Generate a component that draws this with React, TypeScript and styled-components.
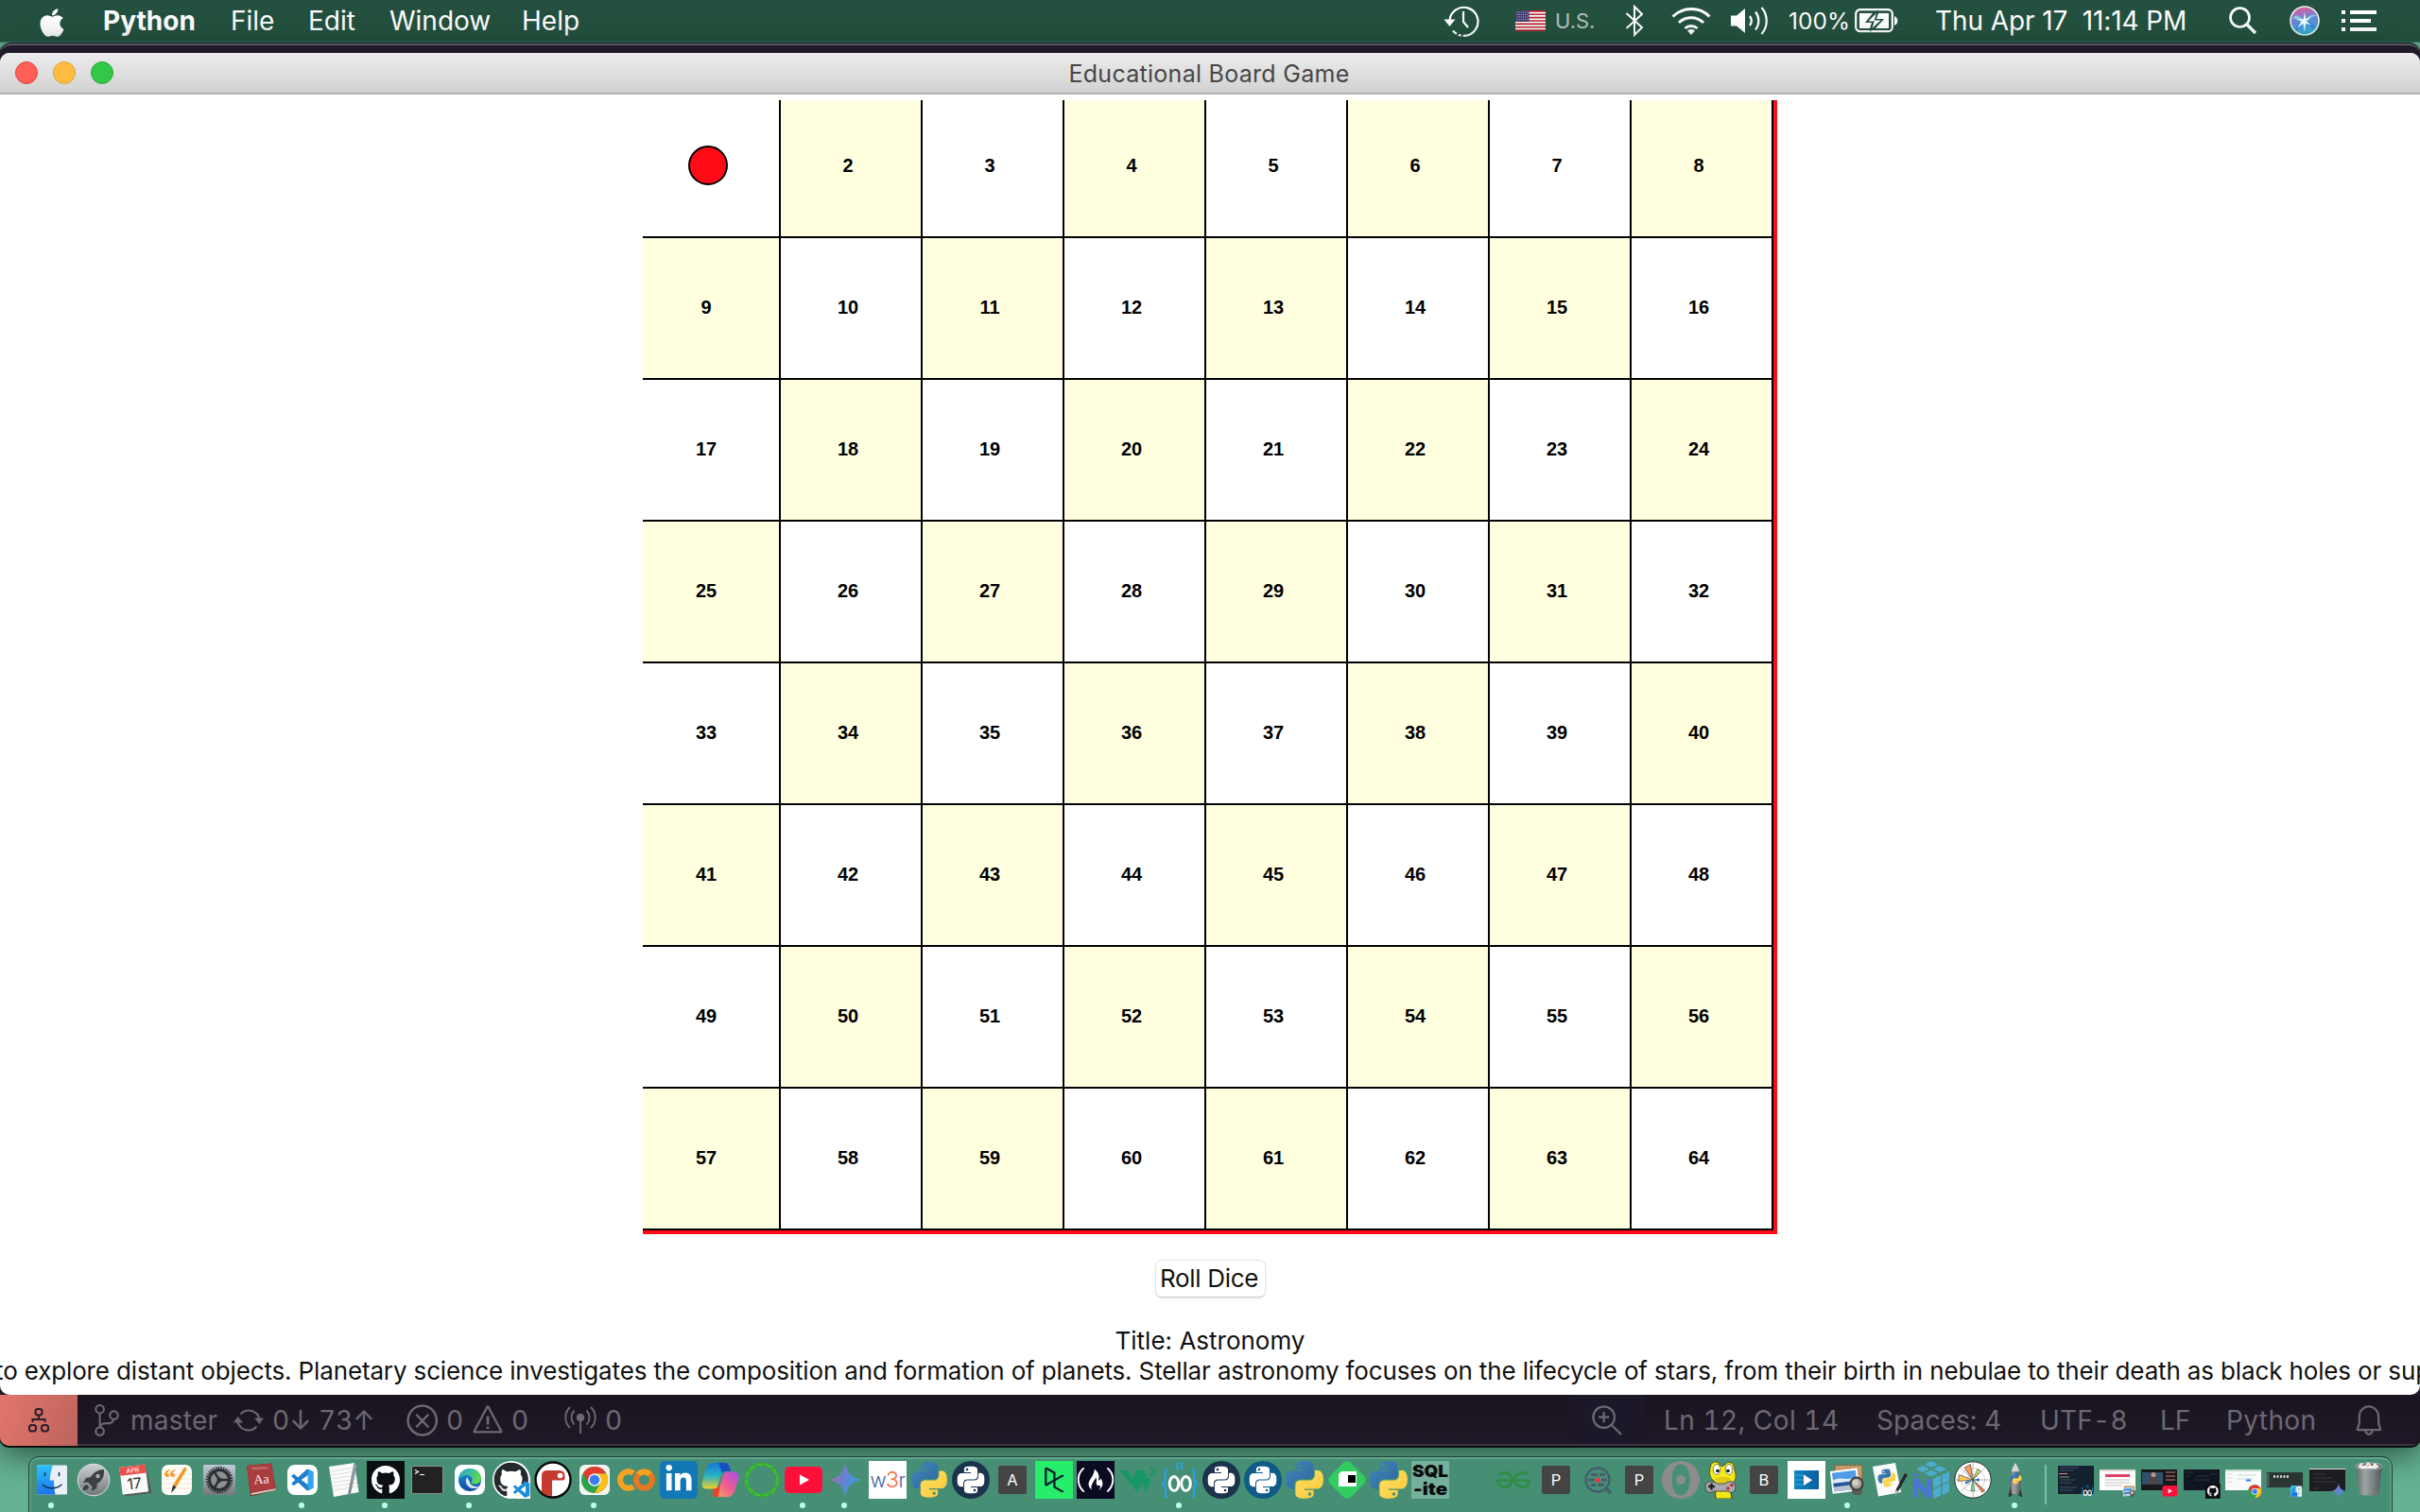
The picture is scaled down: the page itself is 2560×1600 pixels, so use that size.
import React from 'react';
import styled, { createGlobalStyle } from 'styled-components';
import { FaApple, FaGithub, FaLinkedinIn, FaFreeCodeCamp } from 'react-icons/fa';
import { SiPython, SiDatacamp, SiGeeksforgeeks } from 'react-icons/si';
import { VscSourceControl, VscError, VscWarning, VscZoomIn, VscBell } from 'react-icons/vsc';

const Global = createGlobalStyle`
  body { margin: 0; background: #5ea98c; overflow: hidden; }
  * { box-sizing: border-box; }
  svg { display: block; flex: none; }
`;

const Desktop = styled.div`
  width: 2560px;
  height: 1600px;
  display: flex;
  flex-direction: column;
  overflow: hidden;
  font-family: Inter, 'Liberation Sans', sans-serif;
  background: #64b294;
`;

/* ---------- menu bar ---------- */
const MenuBar = styled.header`
  height: 45px;
  flex: none;
  display: flex;
  align-items: center;
  padding: 0 46px 0 38px;
  background: #24513f;
  border-bottom: 1px solid #3b7660;
  color: #fff;
`;
const MenuItem = styled.div<{ $w: number; $bold?: boolean; $ls?: number }>`
  width: ${p => p.$w}px;
  flex: none;
  font-size: 28px;
  line-height: 44px;
  white-space: pre;
  font-weight: ${p => (p.$bold ? 700 : 400)};
  letter-spacing: ${p => p.$ls ?? 0}px;
`;
const Spacer = styled.div`
  flex: 1;
`;
const Tray = styled.div<{ $w: number; $size?: number; $ls?: number; $dim?: boolean }>`
  width: ${p => p.$w}px;
  flex: none;
  display: flex;
  align-items: center;
  height: 44px;
  font-size: ${p => p.$size ?? 28}px;
  letter-spacing: ${p => p.$ls ?? 0}px;
  color: ${p => (p.$dim ? '#b4c2bc' : '#fff')};
  white-space: pre;
`;

/* ---------- windows ---------- */
const EditorWindow = styled.section`
  height: 1485px;
  flex: none;
  margin-top: 1px;
  display: flex;
  flex-direction: column;
  background: #211a2b;
  border-top: 2px solid #5c5664;
  border-bottom: 1px solid #0d0b10;
  border-radius: 12px 12px 10px 10px;
  box-shadow: 0 0 0 1px #0c1a15, 0 8px 34px rgba(20, 45, 36, 0.75);
  padding-top: 8px;
  overflow: hidden;
`;
const GameWindow = styled.main`
  height: 1420px;
  flex: none;
  display: flex;
  flex-direction: column;
  align-items: center;
  background: #fff;
  border-radius: 10px;
  overflow: hidden;
`;
const TitleBar = styled.div`
  width: 100%;
  height: 44px;
  flex: none;
  display: flex;
  align-items: center;
  padding: 0 16px;
  gap: 16px;
  background: linear-gradient(#ececec, #d2d2d2);
  border-bottom: 2px solid #b1b1b1;
`;
const Light = styled.i<{ $c: string; $b: string }>`
  width: 24px;
  height: 24px;
  border-radius: 50%;
  background: ${p => p.$c};
  border: 1px solid ${p => p.$b};
`;
const WindowTitle = styled.h1`
  margin: 0 122px 0 0;
  padding-top: 3px;
  flex: 1;
  text-align: center;
  font-size: 25px;
  font-weight: 400;
  line-height: 39px;
  letter-spacing: 0.28px;
  color: #474747;
`;
const Board = styled.div`
  margin-top: 6px;
  width: 1200px;
  height: 1200px;
  flex: none;
  display: grid;
  grid-template-columns: 146px repeat(7, 150px);
  grid-template-rows: 146px repeat(7, 150px);
  border-right: 4px solid #ff0b18;
  border-bottom: 4px solid #ff0b18;
`;
const Cell = styled.div<{ $tint: boolean }>`
  display: flex;
  align-items: flex-end;
  justify-content: flex-end;
  padding: 0 57px 65px 0;
  border-right: 2px solid #000;
  border-bottom: 2px solid #000;
  background: ${p => (p.$tint ? '#ffffe0' : '#fff')};
`;
const CellNumber = styled.span`
  width: 40px;
  height: 20px;
  text-align: center;
  font: bold 20px/20px 'Liberation Sans', Arial, sans-serif;
  color: #000;
`;
const Token = styled.span`
  width: 42px;
  height: 42px;
  margin: 0 -3px -11px 0;
  flex: none;
  border-radius: 50%;
  background: #ff0b18;
  border: 2px solid #000;
`;
const RollButton = styled.button`
  margin-top: 27px;
  width: 117px;
  height: 40px;
  flex: none;
  padding: 0 2px 0 0;
  border: 1px solid #e4e4e4;
  border-bottom-color: #cfcfcf;
  border-radius: 7px;
  background: #fff;
  box-shadow: 0 1px 2px rgba(0, 0, 0, 0.12);
  font: 400 26px/36px Inter, sans-serif;
  letter-spacing: -0.3px;
  color: #111;
  white-space: nowrap;
`;
const Caption = styled.p<{ $top: number; $ls: number; $shift?: number }>`
  margin: ${p => p.$top}px 0 0;
  padding-left: ${p => p.$shift ?? 0}px;
  height: 32px;
  flex: none;
  font-size: 26px;
  line-height: 32px;
  letter-spacing: ${p => p.$ls}px;
  white-space: nowrap;
  color: #111;
`;

/* ---------- status bar ---------- */
const StatusBar = styled.footer`
  height: 54px;
  flex: none;
  display: flex;
  color: #6c6872;
  background: linear-gradient(#1a1420, #1f1927);
  border-bottom: 2px solid #3c3744;
`;
const Remote = styled.div`
  width: 82px;
  height: 54px;
  display: flex;
  align-items: center;
  justify-content: center;
  background: linear-gradient(110deg, #e2766c, #bd645c);
`;
const StatusPart = styled.div<{ $w: number; $ls?: number; $hl?: boolean; $center?: boolean }>`
  width: ${p => p.$w}px;
  height: 52px;
  padding-top: 2px;
  flex: none;
  display: flex;
  align-items: center;
  justify-content: ${p => (p.$center ? 'center' : 'flex-start')};
  font-size: 28px;
  font-variant-numeric: tabular-nums;
  letter-spacing: ${p => p.$ls ?? 0}px;
  white-space: pre;
  background: ${p => (p.$hl ? '#1c1829' : 'transparent')};
`;

/* ---------- dock ---------- */
const DockArea = styled.div`
  flex: 1;
  display: flex;
  justify-content: center;
  padding-top: 10px;
`;
const Dock = styled.nav`
  width: 2501px;
  height: 70px;
  display: flex;
  padding: 4px 0 0 2.2px;
  background: #468f75;
  border: 1px solid #1e4436;
  border-radius: 11px 11px 0 0;
  box-shadow: inset 0 2px 0 #62a78d, inset 2px 0 0 #5b9f86, inset -2px 0 0 #5b9f86;
`;
const Slot = styled.div<{ $w?: number }>`
  width: ${p => p.$w ?? 44.2}px;
  flex: none;
  display: flex;
  flex-direction: column;
  align-items: center;
  gap: 4px;
`;
const Dot = styled.i`
  width: 6px;
  height: 6px;
  margin-left: -2px;
  border-radius: 50%;
  background: #c3ffe9;
`;
const Divider = styled.i`
  width: 2px;
  height: 42px;
  margin: 4px 8.5px 0 9.4px;
  flex: none;
  background: #7dc0a6;
`;

/* ---------- drawings ---------- */
const PY_TOP =
  'M126.916.072c-64.832 0-60.784 28.115-60.784 28.115l.072 29.128h61.868v8.745H41.631S.145 61.355.145 126.77c0 65.417 36.21 63.097 36.21 63.097h21.61v-30.356s-1.165-36.21 35.632-36.21h61.362s34.475.557 34.475-33.319V33.97S194.67.072 126.916.072zM92.802 19.66a11.12 11.12 0 0 1 11.13 11.13 11.12 11.12 0 0 1-11.13 11.13 11.12 11.12 0 0 1-11.13-11.13 11.12 11.12 0 0 1 11.13-11.13z';
const PY_BOTTOM =
  'M128.757 254.126c64.832 0 60.784-28.115 60.784-28.115l-.072-29.127H127.6v-8.745h86.441s41.486 4.705 41.486-60.712c0-65.416-36.21-63.096-36.21-63.096h-21.61v30.355s1.165 36.21-35.632 36.21h-61.362s-34.475-.557-34.475 33.32v56.013s-5.235 33.897 62.518 33.897zm34.114-19.586a11.12 11.12 0 0 1-11.13-11.13 11.12 11.12 0 0 1 11.13-11.131 11.12 11.12 0 0 1 11.13 11.13 11.12 11.12 0 0 1-11.13 11.13z';
const CODE_MARK =
  'M23.15 2.587L18.21.21a1.494 1.494 0 0 0-1.705.29l-9.46 8.63-4.12-3.128a.999.999 0 0 0-1.276.057L.327 7.261A1 1 0 0 0 .326 8.74L3.899 12 .326 15.26a1 1 0 0 0 .001 1.479L1.65 17.94a.999.999 0 0 0 1.276.057l4.12-3.128 9.46 8.63a1.492 1.492 0 0 0 1.704.29l4.942-2.377A1.5 1.5 0 0 0 24 20.06V3.939a1.5 1.5 0 0 0-.85-1.352zm-5.146 14.861L10.826 12l7.178-5.448v10.896z';

const Art = ({ children }: { children?: React.ReactNode }) => (
  <svg width="40" height="40" viewBox="0 0 40 40" fontFamily="Inter, sans-serif">
    {children}
  </svg>
);
const Snakes = ({ x, y, s }: { x: number; y: number; s: number }) => (
  <g transform={`translate(${x} ${y}) scale(${s / 256})`}>
    <path d={PY_TOP} fill="url(#pyBlue)" />
    <path d={PY_BOTTOM} fill="url(#pyYellow)" />
  </g>
);
const FinderFace = () => (
  <g>
    <rect x="4" y="4.5" width="32" height="31" rx="1.5" fill="#e9eff8" />
    <path d="M5.500 4.500H21c-2 5-3 10-3.300 16H22c0 5 .4 10 1.500 15H5.500A1.500 1.500 0 0 1 4 34V6a1.500 1.500 0 0 1 1.500-1.500z" fill="url(#finderBlue)" />
    <path d="M12.500 12.500v3M27.500 12.500v3" stroke="#12304f" strokeWidth="1.600" strokeLinecap="round" />
    <path d="M10 25c5 5 15 5 20 0" stroke="#12304f" strokeWidth="1.300" fill="none" strokeLinecap="round" />
  </g>
);
const ChromeDisc = () => (
  <g>
    <circle cx="20" cy="20" r="14" fill="#2ba24c" />
    <path d="M7.880 13A14 14 0 0 1 32.400 13.500H20l-6 10z" fill="#e33b2e" />
    <path d="M20 13.500h12.400A14 14 0 0 1 20 34l6-10.500z" fill="#fbc116" />
    <circle cx="20" cy="20" r="6.800" fill="#fff" />
    <circle cx="20" cy="20" r="5.400" fill="#3b7ded" />
  </g>
);
const Spark = () => <path d="M20 1c1.400 11.500 7 17.500 18 19-11 1.500-16.600 7.500-18 19-1.400-11.500-7-17.500-18-19 11-1.500 16.600-7.500 18-19z" fill="url(#spark)" />;
const RobotEyes = () => (
  <g fill="none">
    <path d="M7.500 8.500C3.500 8.500 5 13 5 17c0 3-1 5-3 6.500 2 1.500 3 3.500 3 6.500 0 4-1.500 8 2.500 8M32.500 8.500c4 0 2.500 4.500 2.500 8.500 0 3 1 5 3 6.500-2 1.500-3 3.500-3 6.500 0 4 1.500 8-2.500 8" stroke="#23a4ef" strokeWidth="2" />
    <path d="M18 1.500c-1.500 3-1.500 5 0 8M22.500 1.500c-1 3-1 5 .3 8" stroke="#23a4ef" strokeWidth="1.800" />
    <ellipse cx="14" cy="24" rx="4.800" ry="7.500" stroke="#fff" strokeWidth="3" />
    <ellipse cx="26.500" cy="24" rx="4.800" ry="7.500" stroke="#fff" strokeWidth="3" />
  </g>
);
const PhotoPreview = () => (
  <g>
    <rect x="6" y="4.500" width="29" height="25" fill="#c39a68" stroke="#77552f" strokeDasharray="2 1" />
    <g transform="rotate(-7 18 20)">
      <rect x="2" y="9" width="29" height="24" fill="#fff" />
      <rect x="4" y="11" width="25" height="20" fill="#4e9be8" />
      <path d="M4 19c8-4 16 3 25-1v7H4z" fill="#dceaf5" />
      <path d="M4 22h25v4H4z" fill="#27549b" />
      <path d="M4 26h25v5H4z" fill="#b7c3cf" />
    </g>
    <rect x="24" y="27" width="11" height="9" rx="4" fill="#5e5a57" />
    <circle cx="29" cy="24" r="6.500" fill="#a7a5a2" stroke="#3d3c3b" strokeWidth="2" />
    <circle cx="28" cy="23" r="3.200" fill="#d5cec2" />
  </g>
);

const Defs = () => (
  <svg width="0" height="0" style={{ position: 'absolute' }}>
    <defs>
      <linearGradient id="pyBlue" x2="1" y2="1"><stop stopColor="#3f87bd" /><stop offset="1" stopColor="#30669a" /></linearGradient>
      <linearGradient id="pyYellow" x2="1" y2="1"><stop stopColor="#ffe062" /><stop offset="1" stopColor="#f9c83a" /></linearGradient>
      <linearGradient id="finderBlue" x2="0" y2="1"><stop stopColor="#2bc2fb" /><stop offset="1" stopColor="#1a73ee" /></linearGradient>
      <linearGradient id="spark" x1="0" y1=".3" x2="1" y2=".7"><stop stopColor="#c06a86" /><stop offset=".4" stopColor="#6d7fd0" /><stop offset="1" stopColor="#27a5dd" /></linearGradient>
      <linearGradient id="steel" x2="0" y2="1"><stop stopColor="#cdd0d2" /><stop offset="1" stopColor="#75787b" /></linearGradient>
      <linearGradient id="prefs" x2="0" y2="1"><stop stopColor="#bccbd5" /><stop offset="1" stopColor="#76797c" /></linearGradient>
      <linearGradient id="copA" x2="0" y2="1"><stop stopColor="#1478d8" /><stop offset=".5" stopColor="#28b1c3" /><stop offset="1" stopColor="#f3d126" /></linearGradient>
      <linearGradient id="copB" x1="1" x2="0" y2="1"><stop stopColor="#a550ee" /><stop offset=".5" stopColor="#ee5a8f" /><stop offset="1" stopColor="#fcaf5b" /></linearGradient>
      <linearGradient id="edgeA" x2="1" y2=".4"><stop stopColor="#24a3dc" /><stop offset="1" stopColor="#5bd853" /></linearGradient>
      <linearGradient id="edgeB" x2="0" y2="1"><stop stopColor="#1f93da" /><stop offset="1" stopColor="#0e4ba0" /></linearGradient>
      <linearGradient id="bin" x2="1"><stop stopColor="#63686b" /><stop offset=".35" stopColor="#a0a5a7" /><stop offset="1" stopColor="#53575a" /></linearGradient>
      <linearGradient id="play" x2="1"><stop stopColor="#0f86c4" /><stop offset="1" stopColor="#0b5d9c" /></linearGradient>
      <linearGradient id="siri" x1=".3" y1="0" x2=".5" y2="1"><stop stopColor="#e85a9b" /><stop offset=".45" stopColor="#6b84d8" /><stop offset="1" stopColor="#2bb5d8" /></linearGradient>
    </defs>
  </svg>
);

const Letter = ({ c }: { c: string }) => (
  <Art>
    <rect x="5" y="5" width="30" height="30" rx="2" fill="#444" />
    <text x="20" y="26" fontSize="16.500" textAnchor="middle" fill="#fff">{c}</text>
  </Art>
);
const PyDisc = ({ bg }: { bg: string }) => (
  <Art>
    <circle cx="20" cy="20" r="20" fill={bg} />
    <SiPython x={5.500} y={5.500} size={29} color="#fff" />
  </Art>
);

const apps: { art: React.ReactNode; on?: boolean }[] = [
  { on: true, art: <Art><FinderFace /></Art> },
  { art: <Art>
    <circle cx="20" cy="20" r="16.800" fill="url(#steel)" stroke="#dfe2e3" strokeWidth="1" />
    <path d="M31 9c-6 0-11 3-14 8l-5 1-3 5 5-.5 4.500 4.500L18 32l5-3 1-5c5-3 7.500-8 7-15z" fill="#3c4043" />
    <circle cx="24.500" cy="16" r="2.200" fill="#a9acae" />
    <path d="M13 25c-3 0-4 3-4.500 6.500C12 31 15 30 15 27z" fill="#3c4043" />
  </Art> },
  { art: <Art>
    <g transform="rotate(-7 20 20)">
      <path d="M6 8h27l3 28H7z" fill="#555b59" />
      <rect x="5" y="5" width="27.500" height="29" rx="1" fill="#fafafa" />
      <path d="M5 5h27.500v9H5z" fill="#e8514c" />
      <text x="18.700" y="12" fontSize="7" textAnchor="middle" fill="#fff">APR</text>
      <text x="18.700" y="29.500" fontSize="16" textAnchor="middle" fill="#333">17</text>
    </g>
  </Art> },
  { art: <Art>
    <rect x="4" y="4" width="32" height="32" rx="7" fill="#fffdf8" />
    <path d="M4 14h32M4 19h32M4 24h32M4 29h32" stroke="#f3ddcc" strokeWidth=".8" />
    <text x="6" y="27" fontSize="27" fontWeight="700" fill="#f79a31" fontFamily="Liberation Serif, serif">“</text>
    <path d="M28 6.500 31 8 19.500 27.500 16 25.500z" fill="#f39a26" />
    <path d="M16 25.500l3.500 2L15 33l-1 .5z" fill="#333" />
  </Art> },
  { art: <Art>
    <rect x="3" y="4" width="34" height="32" rx="1.500" fill="url(#prefs)" />
    <circle cx="20" cy="20" r="13" fill="none" stroke="#2e3033" strokeWidth="2.500" strokeDasharray="1.600 1.100" />
    <circle cx="20" cy="20" r="10.500" fill="#8c9093" stroke="#2b2d30" strokeWidth="3" />
    <path d="M20 20h9M20 20l-5-8M20 20l-5 8" stroke="#2b2d30" strokeWidth="2.500" />
    <circle cx="20" cy="20" r="2.500" fill="#2b2d30" />
  </Art> },
  { art: <Art>
    <path d="M5 5 31 2.500 36 31 9 37.500z" fill="#7b2526" />
    <path d="M9.500 34 35.500 29v2L10 36z" fill="#d9cfc2" />
    <path d="M5 5 31 2.500 35.500 29 9 34z" fill="#a93d3f" />
    <text x="20.500" y="24" fontSize="14" textAnchor="middle" fill="#f7e9e4" fontFamily="Liberation Serif, serif" transform="rotate(-4 20 20)">Aa</text>
    <text x="19" y="8.500" fontSize="4" textAnchor="middle" fill="#e9c9c4" fontFamily="Liberation Serif, serif" transform="rotate(-4 20 8)">Dictionary</text>
  </Art> },
  { on: true, art: <Art>
    <rect x="4" y="4" width="32" height="32" rx="8" fill="#fff" />
    <g transform="translate(8.500 8.500)"><path d={CODE_MARK} fill="#1f7fc9" transform="scale(.96)" /><path d="M17.300 .8v21.500l5.500-2.600V3.200z" fill="#34a5ee" /></g>
  </Art> },
  { art: <Art>
    <path d="M4 6 31 2 35.500 33 9 38z" fill="#fbfbfa" />
    <path d="M6 11l26-4M6.500 15l26-4M7 19l26-4M7.500 23l26-4M8 27l26-4M8.500 31l26-4" stroke="#cfd2d2" strokeWidth=".7" />
    <path d="M30.500 2.500 34 3.500 27 34l-3 4 .5-5z" fill="#74828c" />
    <path d="M31.500 4l1 .3L26 33z" fill="#c7d3da" />
  </Art> },
  { on: true, art: <Art>
    <rect width="40" height="40" fill="#0b0e12" />
    <FaGithub x={4.500} y={4.500} size={31} color="#fff" />
  </Art> },
  { art: <Art>
    <rect x="3.500" y="5.500" width="33" height="29" rx="1.500" fill="#222" stroke="#8d9392" strokeWidth="1" />
    <path d="M7 9.500l3.500 2L7 13.500M12 14.500h5" stroke="#fff" strokeWidth="1.200" fill="none" />
  </Art> },
  { on: true, art: <Art>
    <rect x="4" y="4" width="32" height="32" rx="8" fill="#fff" />
    <circle cx="20" cy="20" r="12" fill="url(#edgeB)" />
    <path d="M8 19C9 12 14 8 20 8c7 0 12 5 12 10.500 0 4-3.500 6-6.500 6-3.500 0-4-1.500-4-2.500 1-1 1.500-2 .8-4-1.300-3-8-5.500-14.300 1z" fill="url(#edgeA)" />
    <path d="M17 17c-3 5 0 11 6 12 4 .5 6-1 7.500-2.500-3 1-9 1-10.500-4z" fill="#fff" opacity=".85" />
  </Art> },
  { art: <Art>
    <circle cx="20" cy="20" r="20" fill="#fff" />
    <FaGithub x={1} y={1.200} size={37.500} color="#24292e" />
    <path d="M22 24h16l2-2v18H25z" fill="#fff" />
    <path d={CODE_MARK} fill="#1d8fd8" transform="translate(22 21.500) scale(.72)" />
  </Art> },
  { art: <Art>
    <circle cx="20" cy="20" r="18.500" fill="#fff" stroke="#0a0708" strokeWidth="2.400" />
    <path d="M8 33V16c0-4 2-6 6-6h13c4 0 5.500 3 5.500 6v2.500c0 1-1 2-2 2H19V37c-4.500 0-8-1.500-11-4z" fill="#c73a32" />
    <circle cx="27.500" cy="15.500" r="2.800" fill="#fff" />
  </Art> },
  { on: true, art: <Art><rect x="4" y="4" width="32" height="32" rx="6" fill="#f3f3ef" /><ChromeDisc /></Art> },
  { art: <Art>
    <path d="M17 12.900A8.800 8.800 0 1 0 17 27.100" fill="none" stroke="#f7a321" strokeWidth="6" />
    <circle cx="28.500" cy="20" r="8.500" fill="none" stroke="#e87722" strokeWidth="6" />
    <path d="M22.500 14a8.500 8.500 0 0 1 12 0" fill="none" stroke="#f7a321" strokeWidth="6" />
  </Art> },
  { art: <Art>
    <rect width="40" height="40" rx="5" fill="#1277b5" />
    <FaLinkedinIn x={4.500} y={4} size={31} color="#fff" />
  </Art> },
  { art: <Art>
    <path d="M13 2h12c3 0 4 2 5 5l1 4h-5c-3 0-4 1.500-5 5l-4 11c-1 2-2 2.500-4 2.500H6c-4 0-6.500-2-5-8L5 8c1.500-4 4-6 8-6z" fill="url(#copA)" />
    <path d="M27 38H15c-3 0-3-2-3-5l1-3c3 0 5-1.500 6-5l4-11c1-2 2-2.500 4-2.500h7c4 0 6.500 2 5 8L35 32c-1.500 4-4 6-8 6z" fill="url(#copB)" />
    <path d="M18 2h7c3 0 4 2 5 5l1 4h-5c-2 0-3 .5-4 2z" fill="#1650c0" />
    <path d="M12 29.500c4 .5 6-1.500 7-4.500l1-2-2 15h-3c-3 0-3.500-2-3-5z" fill="#e6432d" />
    <path d="M22 13c-1 1-1.500 2-2 4l-3 10c2 0 2.500-1 3-3l3-9c.5-1.500 1.500-2.500 3-3z" fill="#468f75" />
  </Art> },
  { art: <Art>
    <circle cx="20" cy="20" r="16.500" fill="none" stroke="#37a53a" strokeWidth="4.500" opacity=".75" />
    <circle cx="20" cy="20" r="16.500" fill="none" stroke="#3cc42f" strokeWidth="2.200" strokeDasharray="7 2" />
  </Art> },
  { on: true, art: <Art>
    <rect x="0" y="6" width="40" height="28" rx="5" fill="#ff0f3a" />
    <path d="M16 14.500v11l10-5.500z" fill="#fff" />
  </Art> },
  { on: true, art: <Art><Spark /></Art> },
  { art: <Art>
    <rect width="40" height="40" fill="#fff" />
    <text x="20" y="27.500" fontSize="21" textAnchor="middle" letterSpacing="-.6" fontWeight="300" fill="#3e62a8">w<tspan fill="#f26b3a" fontSize="23">3</tspan>r</text>
  </Art> },
  { art: <Art><Snakes x={1} y={1} s={38} /></Art> },
  { art: <PyDisc bg="#1b344c" /> },
  { art: <Letter c="A" /> },
  { art: <Art><rect width="40" height="40" fill="#26ee6a" /><SiDatacamp x={7} y={6.500} size={27} color="#05192d" /></Art> },
  { art: <Art><rect width="40" height="40" fill="#0a0a23" /><FaFreeCodeCamp x={0.500} y={0.500} size={39} color="#fff" viewBox="0 0 576 512" /></Art> },
  { art: <Art>
    <path d="M1 10h8l5 10 4-10h8l4 9 2-2 1.500 3L29 33l-5-10-5 10z" fill="#159768" />
    <text x="31" y="16" fontSize="13" fontWeight="600" fill="#159768">3</text>
  </Art> },
  { on: true, art: <Art><RobotEyes /></Art> },
  { art: <PyDisc bg="#1b344c" /> },
  { art: <PyDisc bg="#0f5c88" /> },
  { art: <Art><Snakes x={0} y={0} s={40} /></Art> },
  { art: <Art>
    <path d="M15 3q5-5.500 10 0l12 12q5.500 5 0 10L25 37q-5 5.500-10 0L3 25q-5.500-5 0-10z" fill="#32cd5f" />
    <path d="M14 11h16v16H11V14z" fill="#fff" />
    <rect x="21" y="15" width="8" height="8" fill="#000" />
  </Art> },
  { art: <Art><Snakes x={0} y={0} s={40} /></Art> },
  { art: <Art>
    <rect width="40" height="40" fill="#74b09b" />
    <text x="20" y="16.500" fontSize="18" fontWeight="900" textAnchor="middle" textLength="38" lengthAdjust="spacingAndGlyphs" fill="#0b0b0b">SQL</text>
    <text x="20" y="35.500" fontSize="18" fontWeight="900" textAnchor="middle" textLength="36" lengthAdjust="spacingAndGlyphs" fill="#0b0b0b">-ite</text>
  </Art> },
  { art: <Art /> },
  { art: <Art><SiGeeksforgeeks x={2} y={2} size={36} color="#2f8d46" /></Art> },
  { art: <Letter c="P" /> },
  { art: <Art>
    <circle cx="20" cy="20" r="12.500" fill="none" stroke="#43606a" strokeWidth="2.500" />
    <path d="M29 29l5 5" stroke="#43606a" strokeWidth="3.500" />
    <path d="M13 14.500h7M22 14.500h6M10 20h7M24 20h6M13 25.500h5M20 25.500h7" stroke="#43606a" strokeWidth="3" />
    <rect x="18" y="18" width="4.500" height="4.500" fill="#ee3049" />
  </Art> },
  { art: <Letter c="P" /> },
  { art: <Art>
    <path fillRule="evenodd" d="M20 0a20 20 0 1 0 0 40 20 20 0 1 0 0-40zm0 3.500c6 0 9.500 7 9.500 16.500S26 36.500 20 36.500 10.500 29.500 10.500 20 14 3.500 20 3.500z" fill="#8c8c8c" />
    <circle cx="20" cy="20" r="5" fill="#8c8c8c" />
  </Art> },
  { art: <Art>
    <path d="M12 26h16l2 14H13z" fill="#f1e616" stroke="#222" strokeWidth=".8" />
    <path d="M8 4c2-4 8-4 9 0 1 2 4 2 6 0 2-4 8-3 9 1l2 9c1 5-2 10-8 12-6 1-12-1-15-5-4-3-6-8-3-17z" fill="#f4ea1a" stroke="#444407" strokeWidth=".8" />
    <ellipse cx="14" cy="9" rx="3.800" ry="5.500" fill="#fff" stroke="#333" strokeWidth=".6" />
    <ellipse cx="27" cy="9" rx="3.800" ry="5.500" fill="#fff" stroke="#333" strokeWidth=".6" />
    <circle cx="15" cy="10.500" r="1.800" fill="#111" /><circle cx="26" cy="10.500" r="1.800" fill="#111" />
    <path d="M12 19c5-3 14-3 17 0-4 6-13 6-17 0z" fill="#dccb10" />
    <path d="M2 27c0-6 8-7 13-3h8c5-4 10-3 11 3 0 6-4 8-8 5H12c-5 3-10 1-10-5z" fill="#a9a9ad" stroke="#333" strokeWidth=".8" />
    <path d="M5 27h7M8.500 23.500v7" stroke="#222" strokeWidth="2.400" />
    <circle cx="26" cy="29" r="1.800" fill="#c9272b" /><circle cx="30" cy="25.500" r="1.800" fill="#c9272b" />
  </Art> },
  { art: <Letter c="B" /> },
  { art: <Art>
    <rect width="40" height="40" fill="#fff" />
    <rect x="7" y="10" width="26" height="20" fill="url(#play)" />
    <path d="M7 15h10M7 20h10M7 25h10" stroke="#41a5d6" strokeWidth="1" />
    <path d="M17 14.500v11.500l9-5.700z" fill="#fff" />
  </Art> },
  { on: true, art: <Art><PhotoPreview /></Art> },
  { art: <Art>
    <path d="M2 6 26 2 32 33 8 37.500z" fill="#fbfbfb" />
    <g transform="rotate(-8 17 18)"><Snakes x={7.500} y={8.500} s={19} /></g>
    <path d="M36 13l3 1.500-9 16-5 7.500 2-8.500z" fill="#26282b" />
    <path d="M27 31l2 1-4 6z" fill="#c9ccd0" />
  </Art> },
  { art: <Art>
    <path d="M1 18 1 38 6 40V28l9 12 5-2V20l-5-2v12L6 18z" fill="#4b76d1" />
    <path d="M20 0l7 3.500-7 3.500-7-3.500zM11 5l7 3.500-7 3.500-7-3.500zM29 5l7 3.500-7 3.500-7-3.500zM20 9.500l7 3.500-7 3.500-7-3.500z" fill="#4dabcf" />
    <path d="M22 19l8-4v10l-8 4zM31.500 14.500 39 11v10l-7.500 3.500zM22 30.500l8-4v10L22 40zM31.500 26 39 22.500v10L31.500 36z" fill="#4dabcf" />
    <path d="M1 12l8 4-8 0z" fill="#4b76d1" />
  </Art> },
  { art: <Art>
    <circle cx="20" cy="20" r="19.200" fill="#fff" stroke="#222c30" strokeWidth="1" />
    <circle cx="20" cy="20" r="12.500" fill="none" stroke="#bbb" strokeWidth=".7" /><circle cx="20" cy="20" r="6" fill="none" stroke="#bbb" strokeWidth=".7" />
    <path d="M20 1v38M1 20h38M6.600 6.600l26.800 26.800M33.400 6.600 6.600 33.400" stroke="#999" strokeWidth=".7" />
    <path d="M20 20 11 7l6.500-3.500z" fill="#f89a5b" stroke="#333" strokeWidth=".6" />
    <path d="M20 20 4.500 21.500l1-7z" fill="#fbc95a" stroke="#333" strokeWidth=".6" />
    <path d="M20 20 25 8.500l3 2z" fill="#c9ec6c" stroke="#333" strokeWidth=".6" />
    <path d="M20 20 32.500 31l-2.500 2.300z" fill="#f2874a" stroke="#333" strokeWidth=".6" />
    <path d="M20 20 22 31.500h-4z" fill="#7fe093" stroke="#333" strokeWidth=".5" />
    <path d="M20 20 12 25v-3zM20 20l7-1.500v3z" fill="#2f6db5" />
  </Art> },
  { on: true, art: <Art>
    <path d="M15 27l-2 11 4-3zM24 27l3 11-4.500-3z" fill="#3e4244" stroke="#2b2d2e" />
    <path d="M20 2c4 6 6.500 13 6 20 0 5-1.500 9-2.500 13h-7C15 31 14 27 14 22c-.5-7 2-14 6-20z" fill="url(#bin)" />
    <path d="M20 2c2 3 3.300 6 4.200 9h-8.400C16.700 8 18 5 20 2z" fill="#d3d6d7" />
    <Snakes x={14} y={12} s={12.500} />
  </Art> },
];

const Thumb = ({ y = 9, h = 22, bg, children, badge }: { y?: number; h?: number; bg: string; children?: React.ReactNode; badge: React.ReactNode }) => (
  <Art>
    <rect x="1" y={y} width="38" height={h} fill={bg} />
    {children}
    <g transform="translate(25 25) scale(.36)">{badge}</g>
  </Art>
);
const minimized: React.ReactNode[] = [
  <Thumb y={5} h={30} bg="#15212f" badge={<RobotEyes />}>
    <path d="M3 7h20M3 10h14M3 20h16M3 23h12M3 28h18M3 31h14" stroke="#40556b" /><path d="M2 13.500h9" stroke="#d98aa5" /><path d="M3 17h10" stroke="#8b9a6a" />
  </Thumb>,
  <Thumb bg="#fdfdfb" badge={<PhotoPreview />}>
    <path d="M1 10h38" stroke="#d9d6cf" strokeWidth="2" /><path d="M7 15.500h26" stroke="#e0416d" strokeWidth="3" />
    <path d="M7 20h26M7 23h26M7 26h18" stroke="#c9c3c8" />
  </Thumb>,
  <Thumb bg="#17191b" badge={<><rect x="-4" y="3" width="44" height="32" rx="6" fill="#ff0f3a" /><path d="M13 12v14l12-7z" fill="#fff" /></>}>
    <rect x="2" y="12" width="22" height="13" fill="#31506b" /><path d="M9 25c0-6 2-9 5-9s5 3 5 9z" fill="#4f4348" /><circle cx="14" cy="14.500" r="2.500" fill="#c79073" />
    <path d="M27 12h10M27 16h10M27 20h10" stroke="#6e4a44" strokeWidth="2" />
  </Thumb>,
  <Thumb bg="#0f161f" badge={<><rect x="-3" y="-3" width="44" height="44" fill="#0b0e12" /><FaGithub x={2} y={2} size={34} color="#fff" /></>}>
    <path d="M3 12h8M3 16h5M13 16h14M13 20h16M30 14h7" stroke="#283546" />
  </Thumb>,
  <Thumb bg="#f8fbf9" badge={<g transform="translate(-8 -8) scale(1.400)"><ChromeDisc /></g>}>
    <path d="M1 10h38" stroke="#bfdccb" strokeWidth="2" /><path d="M3 14h6M3 18h6M3 22h6M14 15h20M14 19h16" stroke="#c4dccf" /><path d="M23 20.500h5" stroke="#3b7ded" strokeWidth="2" />
  </Thumb>,
  <Thumb y={12} h={16} bg="#2b3634" badge={<FinderFace />}>
    <path d="M8 16.500h17" stroke="#e4e9e8" strokeWidth="2.500" strokeDasharray="2 1.500" /><path d="M2 13v14" stroke="#4d5c59" strokeWidth="3" />
  </Thumb>,
  <Thumb y={8} h={24} bg="#1c1d20" badge={<g transform="translate(-6 -6) scale(1.250)"><Spark /></g>}>
    <path d="M1 8.500h38" stroke="#ead9e4" strokeWidth="1.200" /><path d="M5 14h14M5 18h20M5 22h24M5 29h6" stroke="#3b3d42" />
  </Thumb>,
  <Art>
    <path d="M6 4 34 4 30.500 35c0 2-21 2-21 0z" fill="url(#bin)" opacity=".95" />
    <ellipse cx="20" cy="5.500" rx="14" ry="3.500" fill="#5b6063" stroke="#b8bcbe" strokeWidth="1" />
    <path d="M8 6l4-4 4 3 3-4 4 4 3-3 5 4-4 2H12z" fill="#f1f1ef" />
    <path d="M12 4l3 1M22 4l3 1M18 6l2-2" stroke="#b9604a" strokeWidth="1" />
  </Art>,
];

const TimeMachine = () => (
  <svg width="38" height="36" viewBox="0 0 38 36" fill="none" stroke="#fff" strokeWidth="2.200">
    <path d="M6.500 18A15 15 0 1 1 10 28.500" strokeDasharray="70 2 3 2" />
    <path d="M21 8v11l5 6" />
    <path d="M.5 16.500h12L6.500 24z" fill="#fff" stroke="none" />
  </svg>
);
const Flag = () => (
  <svg width="32" height="22" viewBox="0 0 32 22">
    <rect width="32" height="22" fill="#fff" />
    <path d="M0 .85h32M0 4.230h32M0 7.600h32M0 11h32M0 14.400h32M0 17.770h32M0 21.150h32" stroke="#b5232f" strokeWidth="1.700" />
    <rect width="14.500" height="11.800" fill="#3c3b6e" />
    <path d="M1.500 2h12M1.500 4.500h12M1.500 7h12M1.500 9.500h12" stroke="#c9c9da" strokeWidth="1" strokeDasharray="1 1.200" />
  </svg>
);
const Bluetooth = () => (
  <svg width="20" height="34" viewBox="0 0 20 34" fill="none" stroke="#fff" strokeWidth="2">
    <path d="M1.500 9 18 24l-8 8V2l8 8L1.500 25" />
  </svg>
);
const Wifi = () => (
  <svg width="42" height="30" viewBox="0 0 42 30" fill="none" stroke="#fff" strokeWidth="3">
    <path d="M1.500 10.500a28 28 0 0 1 39 0M8 17a18.500 18.500 0 0 1 26 0M14.500 23a9.500 9.500 0 0 1 13 0" />
    <path d="M17 25.500a5.500 5.500 0 0 1 8 0L21 30z" fill="#fff" stroke="none" />
  </svg>
);
const Volume = () => (
  <svg width="42" height="32" viewBox="0 0 42 32" fill="none" stroke="#fff" strokeWidth="2.200">
    <path d="M1 10.500h6L16 3v26l-9-7.500H1z" fill="#fff" stroke="none" />
    <path d="M21 11c2.200 3 2.200 7 0 10M27 6.500c4.500 5.500 4.500 13.500 0 19M33.500 2c7 8 7 20 0 28" />
  </svg>
);
const Battery = () => (
  <svg width="46" height="26" viewBox="0 0 46 26">
    <rect x="1.200" y="1.200" width="38.600" height="23" rx="4.500" fill="none" stroke="#fff" strokeWidth="2.200" />
    <path d="M42 8c4.500 2 4.500 8 0 10z" fill="#fff" />
    <path d="M5 5h14l-8 10h7l-2 6H5zM25 5h11v16H22l9-10h-8z" fill="#fff" />
    <path d="M24 3 13 14h7l-3 9 12-11h-7.500z" fill="#fff" stroke="#24513f" strokeWidth="1.200" />
  </svg>
);
const Search = () => (
  <svg width="30" height="30" viewBox="0 0 30 30" fill="none" stroke="#fff" strokeWidth="2.700">
    <circle cx="11.500" cy="11.500" r="10" />
    <path d="M18.500 18.500 28 28" strokeWidth="3.300" />
  </svg>
);
const Siri = () => (
  <svg width="32" height="32" viewBox="0 0 32 32">
    <circle cx="16" cy="16" r="15" fill="url(#siri)" stroke="#e9f4f2" strokeWidth="1.600" />
    <path d="M16 16C9 9 5 9 3 14c3-1 8 1 13 2zM16 16c5-7 9-8 13-5-4 0-8 2-13 5z" fill="#8af0e4" opacity=".7" />
    <path d="M16 16C10 17 6 22 7 26c3-1 6-5 9-10zM16 16c6 1 11 4 11 8-4 0-8-4-11-8z" fill="#2c7df0" opacity=".8" />
    <path d="M16 7l1.300 7L23 12l-5 4.500 5 4-6-1.500-1 9-1.600-9-6.400 5 4.500-7.500L6 14l8.500.5z" fill="#e9fffb" />
  </svg>
);
const ListIcon = () => (
  <svg width="37" height="22" viewBox="0 0 37 22" fill="#fff">
    <path d="M0 0h4v4H0zM0 9h4v4H0zM0 18h4v4H0zM9 0h28v4H9zM9 9h22v4H9zM9 18h28v4H9z" />
  </svg>
);
const Hierarchy = () => (
  <svg width="24" height="26" viewBox="0 0 24 26" fill="none" stroke="#2a1c2b" strokeWidth="2">
    <rect x="8.500" y="1" width="7" height="6.500" rx="2.500" />
    <rect x="2" y="18" width="7" height="6.500" rx="2.500" />
    <rect x="15" y="18" width="7" height="6.500" rx="2.500" />
    <path d="M12 7.500V12M5.500 15v-3h13v3" />
  </svg>
);
const SyncArrows = () => (
  <svg width="32" height="28" viewBox="0 0 32 28" fill="none" stroke="currentColor" strokeWidth="2">
    <path d="M7.500 7.500A11.500 11.500 0 0 1 27.500 13M24.500 20.500A11.500 11.500 0 0 1 4.500 15" />
    <path d="M22 11.500h10L27.500 18zM0 16.500h10L4.500 10z" fill="currentColor" stroke="none" />
  </svg>
);
const Broadcast = () => (
  <svg width="34" height="32" viewBox="0 0 34 32" fill="none" stroke="currentColor" strokeWidth="1.900">
    <path d="M6 2C-.3 8-.3 18 6 24M10.500 5.500c-4 4.500-4 10.500 0 15M28 2c6.300 6 6.300 16 0 22M23.500 5.500c4 4.500 4 10.500 0 15" />
    <circle cx="17" cy="13" r="4.300" fill="currentColor" stroke="none" />
    <path d="M17 14v16" />
  </svg>
);

const numbers = Array.from({ length: 64 }, (_, i) => i + 1);
const isTinted = (n: number) => (Math.floor((n - 1) / 8) + ((n - 1) % 8)) % 2 === 1;

export default function App() {
  return (
    <Desktop>
      <Global />
      <Defs />
      <MenuBar>
        <MenuItem $w={71}><FaApple size={34} style={{ marginTop: 3 }} /></MenuItem>
        <MenuItem $w={135} $bold>Python</MenuItem>
        <MenuItem $w={82}>File</MenuItem>
        <MenuItem $w={86}>Edit</MenuItem>
        <MenuItem $w={140}>Window</MenuItem>
        <MenuItem $w={80}>Help</MenuItem>
        <Spacer />
        <Tray $w={76}><TimeMachine /></Tray>
        <Tray $w={42}><Flag /></Tray>
        <Tray $w={74} $size={22} $dim>U.S.</Tray>
        <Tray $w={49}><Bluetooth /></Tray>
        <Tray $w={62}><Wifi /></Tray>
        <Tray $w={62}><Volume /></Tray>
        <Tray $w={70} $size={24.5}>100%</Tray>
        <Tray $w={85}><Battery /></Tray>
        <Tray $w={311} $ls={-0.1}>Thu Apr 17  11:14 PM</Tray>
        <Tray $w={64}><Search /></Tray>
        <Tray $w={55}><Siri /></Tray>
        <Tray $w={37}><ListIcon /></Tray>
      </MenuBar>

      <EditorWindow>
        <GameWindow>
          <TitleBar>
            <Light $c="#ff5f57" $b="#e2463f" />
            <Light $c="#febc40" $b="#dfa032" />
            <Light $c="#33c748" $b="#27aa35" />
            <WindowTitle>Educational Board Game</WindowTitle>
          </TitleBar>
          <Board>
            {numbers.map(n => (
              <Cell key={n} $tint={isTinted(n)}>
                {n === 1 ? <Token /> : <CellNumber>{n}</CellNumber>}
              </Cell>
            ))}
          </Board>
          <RollButton>Roll Dice</RollButton>
          <Caption $top={30} $ls={0}>Title: Astronomy</Caption>
          <Caption $top={0} $ls={-0.14} $shift={6}>
            to explore distant objects. Planetary science investigates the composition and formation of planets. Stellar astronomy focuses on the lifecycle of stars, from their birth in nebulae to their death as black holes or sup
          </Caption>
        </GameWindow>
        <StatusBar>
          <Remote><Hierarchy /></Remote>
          <StatusPart $w={14} />
          <StatusPart $w={42}><VscSourceControl size={34} /></StatusPart>
          <StatusPart $w={109} $ls={0.25}>master</StatusPart>
          <StatusPart $w={41}><SyncArrows /></StatusPart>
          <StatusPart $w={140}>0↓ 73↑</StatusPart>
          <StatusPart $w={44}><VscError size={38} /></StatusPart>
          <StatusPart $w={26}>0</StatusPart>
          <StatusPart $w={43}><VscWarning size={36} /></StatusPart>
          <StatusPart $w={56}>0</StatusPart>
          <StatusPart $w={43}><Broadcast /></StatusPart>
          <StatusPart $w={20}>0</StatusPart>
          <Spacer />
          <StatusPart $w={80} $hl $center><VscZoomIn size={36} /></StatusPart>
          <StatusPart $w={20} />
          <StatusPart $w={225} $ls={0.5}>Ln 12, Col 14</StatusPart>
          <StatusPart $w={173} $ls={0.1}>Spaces: 4</StatusPart>
          <StatusPart $w={127} $ls={0.2}>UTF-8</StatusPart>
          <StatusPart $w={70}>LF</StatusPart>
          <StatusPart $w={133} $ls={0.4}>Python</StatusPart>
          <StatusPart $w={72}><VscBell size={36} /></StatusPart>
        </StatusBar>
      </EditorWindow>

      <DockArea>
        <Dock>
          {apps.map((a, i) => (
            <Slot key={i}>
              {a.art}
              {a.on && <Dot />}
            </Slot>
          ))}
          <Divider />
          {minimized.map((m, i) => (
            <Slot key={i} $w={44.3}>{m}</Slot>
          ))}
        </Dock>
      </DockArea>
    </Desktop>
  );
}
